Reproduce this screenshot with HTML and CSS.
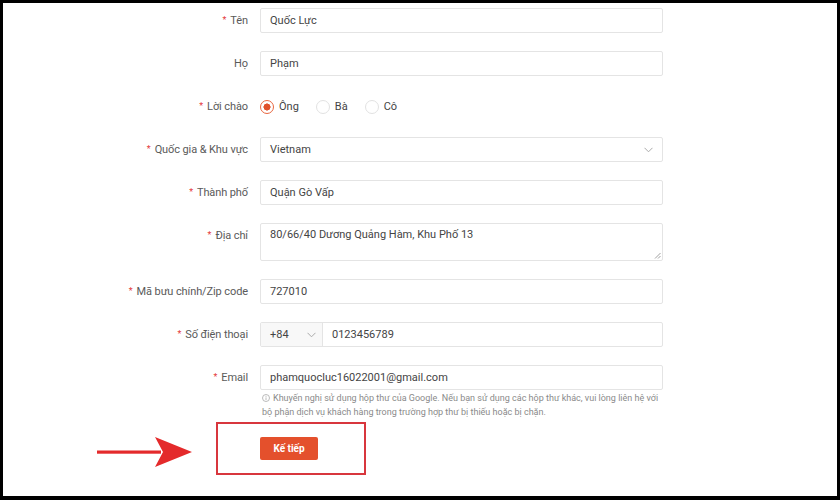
FILE: index.html
```html
<!DOCTYPE html>
<html lang="vi">
<head>
<meta charset="utf-8">
<link rel="stylesheet" href="styles.css">
</head>
<body>
<div class="frame">
  <form class="form">
    <div class="row">
      <label class="label"><span class="req">*</span>Tên</label>
      <div class="field"><div class="input">Quốc Lực</div></div>
    </div>
    <div class="row">
      <label class="label">Họ</label>
      <div class="field"><div class="input">Phạm</div></div>
    </div>
    <div class="row">
      <label class="label"><span class="req">*</span>Lời chào</label>
      <div class="field radios">
        <span class="radio checked"></span><span class="rlabel">Ông</span>
        <span class="radio"></span><span class="rlabel">Bà</span>
        <span class="radio"></span><span class="rlabel">Cô</span>
      </div>
    </div>
    <div class="row">
      <label class="label"><span class="req">*</span>Quốc gia &amp; Khu vực</label>
      <div class="field"><div class="input select">Vietnam
        <svg class="chev" width="9" height="6" viewBox="0 0 9 6"><path d="M0.5 0.8 L4.5 4.8 L8.5 0.8" fill="none" stroke="#aaa" stroke-width="1"/></svg>
      </div></div>
    </div>
    <div class="row">
      <label class="label"><span class="req">*</span>Thành phố</label>
      <div class="field"><div class="input">Quận Gò Vấp</div></div>
    </div>
    <div class="row row-tall">
      <label class="label"><span class="req">*</span>Địa chỉ</label>
      <div class="field"><div class="input textarea">80/66/40 Dương Quảng Hàm, Khu Phố 13
        <svg class="grip" width="7" height="7" viewBox="0 0 7 7"><path d="M6.5 1 L1 6.5 M6.5 4 L4 6.5" stroke="#888" stroke-width="0.8"/></svg>
      </div></div>
    </div>
    <div class="row">
      <label class="label"><span class="req">*</span>Mã bưu chính/Zip code</label>
      <div class="field"><div class="input">727010</div></div>
    </div>
    <div class="row">
      <label class="label"><span class="req">*</span>Số điện thoại</label>
      <div class="field"><div class="input phone">
        <div class="prefix">+84
          <svg width="9" height="6" viewBox="0 0 9 6"><path d="M0.5 0.8 L4.5 4.8 L8.5 0.8" fill="none" stroke="#aaa" stroke-width="1"/></svg>
        </div>
        <div class="number">0123456789</div>
      </div></div>
    </div>
    <div class="row row-email">
      <label class="label"><span class="req">*</span>Email</label>
      <div class="field">
        <div class="input">phamquocluc16022001@gmail.com</div>
        <p class="hint"><svg class="info" width="8" height="8" viewBox="0 0 8 8"><circle cx="4" cy="4" r="3.5" fill="none" stroke="#aaa" stroke-width="0.8"/><path d="M4 3.4 V6" stroke="#aaa" stroke-width="0.8"/><circle cx="4" cy="2.3" r="0.5" fill="#aaa"/></svg>Khuyến nghị sử dụng hộp thư của Google. Nếu bạn sử dụng các hộp thư khác, vui lòng liên hệ với bộ phận dịch vụ khách hàng trong trường hợp thư bị thiếu hoặc bị chặn.</p>
      </div>
    </div>
    <div class="row row-btn">
      <span class="label"></span>
      <div class="field"><button type="button" class="btn">Kế tiếp</button></div>
    </div>
  </form>
  <div class="highlight"></div>
  <svg class="arrow" width="100" height="32" viewBox="0 0 100 32"><rect x="0" y="14.5" width="64" height="3.2" fill="#e42a2b"/><path d="M58 1 L95 16 L58 31 L66 16 Z" fill="#e42a2b"/></svg>
</div>
</body>
</html>
```
FILE: styles.css
```css
html, body {
  margin: 0;
  padding: 0;
  background: #000;
}
.frame {
  position: relative;
  margin: 3px 3px 0 3px;
  width: 834px;
  height: 493px;
  background: #fff;
  overflow: hidden;
  font-family: Roboto, "Liberation Sans", Arial, sans-serif;
  font-size: 11px;
  color: #444;
}
.form {
  padding-top: 5px;
  display: flex;
  flex-direction: column;
  gap: 18px;
}
.row {
  display: grid;
  grid-template-columns: 245px 403px;
  column-gap: 12px;
  align-items: center;
  min-height: 25px;
}
.row-tall, .row-email { align-items: start; }
.row-tall .label, .row-email .label { line-height: 25px; }
.label {
  text-align: right;
  color: #5a5a5a;
  white-space: nowrap;
  letter-spacing: -0.1px;
}
.req {
  color: #e4393c;
  font-size: 9px;
  margin-right: 4px;
  vertical-align: 1px;
}
.input {
  position: relative;
  box-sizing: border-box;
  height: 25px;
  border: 1px solid #e4e4e4;
  border-radius: 2px;
  padding: 0 9px;
  line-height: 23px;
  color: #444;
  background: #fff;
}
.select .chev {
  position: absolute;
  right: 9px;
  top: 9px;
}
.textarea {
  height: 38px;
  line-height: 14px;
  padding-top: 4px;
}
.grip {
  position: absolute;
  right: 1px;
  bottom: 1px;
}
.radios {
  display: flex;
  align-items: center;
  height: 25px;
}
.radio {
  box-sizing: border-box;
  width: 14px;
  height: 14px;
  border-radius: 50%;
  border: 1px solid #e2e2e2;
  background: #fff;
  margin-right: 5px;
}
.radio.checked {
  border-color: #e8663f;
  background: radial-gradient(circle, #e0502a 0 3.3px, #fff 3.8px);
}
.rlabel { margin-right: 17px; }
.phone {
  display: flex;
  padding: 0;
}
.prefix {
  box-sizing: border-box;
  width: 62px;
  padding: 0 6px 0 9px;
  background: #f8f8f8;
  border-right: 1px solid #e4e4e4;
  display: flex;
  align-items: center;
  justify-content: space-between;
}
.number { padding: 0 9px; }
.hint {
  margin: 1px 0 0 0;
  padding-left: 2px;
  font-size: 9px;
  line-height: 14px;
  color: #8a8a8a;
}
.info { margin-right: 3px; vertical-align: -1px; }
.row-btn { margin-top: -1px; }
.btn {
  width: 58px;
  height: 23px;
  border: 0;
  border-radius: 2px;
  background: #e4502c;
  color: #fff;
  font-family: Roboto, "Liberation Sans", Arial, sans-serif;
  font-weight: bold;
  font-size: 10px;
  padding: 0;
}
.highlight {
  position: absolute;
  left: 213px;
  top: 419px;
  width: 146px;
  height: 49px;
  border: 2px solid #d8363d;
}
.arrow {
  position: absolute;
  left: 94px;
  top: 433px;
}
```
